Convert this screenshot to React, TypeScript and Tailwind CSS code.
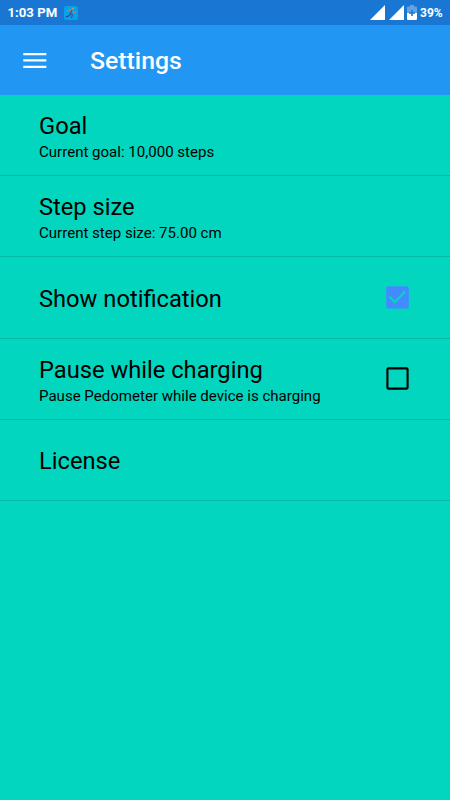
import React from 'react';

interface SettingItem {
  title: string;
  summary?: string;
  checked?: boolean;
}

const items: SettingItem[] = [
  { title: 'Goal', summary: 'Current goal: 10,000 steps' },
  { title: 'Step size', summary: 'Current step size: 75.00 cm' },
  { title: 'Show notification', checked: true },
  { title: 'Pause while charging', summary: 'Pause Pedometer while device is charging', checked: false },
  { title: 'License' },
];

const RunnerIcon = () => (
  <svg width="14" height="14" viewBox="0 0 14 14" className="ml-[7px]">
    <rect width="14" height="14" rx="2.5" fill="#04a3e8" />
    <circle cx="9" cy="2.6" r="1.2" fill="#b49a62" />
    <path d="M8 4 6.3 7.6l2.2 1.7L7.2 12" fill="none" stroke="#4a4fa6" strokeWidth="1.4" />
    <path d="M6.2 8.2 4.5 10 1.8 11" fill="none" stroke="#303a98" strokeWidth="1.2" />
    <path d="M7.5 4.2 4.5 4 3 6M8.5 5l1.5 1.8 2.2-1.3" fill="none" stroke="#b08d64" strokeWidth="1" />
  </svg>
);

const SignalIcon = () => (
  <svg width="15" height="15" viewBox="0 0 15 15">
    <path d="M15 0v15H0z" fill="#fff" />
  </svg>
);

const BatteryIcon = () => (
  <svg width="10" height="15" viewBox="0 0 10 15">
    <path d="M3 0h4v1.5h2q1 0 1 1V8H0V2.5q0-1 1-1h2z" fill="#64a3e2" />
    <path d="M0 8h10v6q0 1-1 1H1q-1 0-1-1z" fill="#fff" />
    <path d="M5 5v6M2 8h6" stroke="#1976d2" strokeWidth="1.6" />
  </svg>
);

const Checkbox: React.FC<{ checked: boolean }> = ({ checked }) => (
  <svg width="23" height="23" viewBox="0 0 23 23" className="shrink-0">
    {checked ? (
      <>
        <rect x="0.2" y="0.2" width="22.6" height="22.4" rx="2" fill="#448aff" />
        <path d="m3.5 10.8 5.5 5.2L19.3 5.4" fill="none" stroke="#02d6be" strokeWidth="2.3" />
      </>
    ) : (
      <rect x="1.4" y="1.4" width="20.2" height="20.2" rx="1" fill="none" stroke="#000" strokeWidth="2.1" />
    )}
  </svg>
);

const SettingRow: React.FC<{ item: SettingItem }> = ({ item }) => (
  <div className="flex h-[81.2px] items-center justify-between border-b border-[#04b8a4] pr-[41px] pl-[39px]">
    <div className="pt-[3px] whitespace-nowrap text-black">
      <p className="text-[23.7px] leading-7">{item.title}</p>
      {item.summary && <p className="mt-[2px] -mb-px text-[15.05px] leading-[20px]">{item.summary}</p>}
    </div>
    {item.checked !== undefined && <Checkbox checked={item.checked} />}
  </div>
);

const App: React.FC = () => {
  return (
    <div className="flex h-[800px] w-[450px] flex-col overflow-hidden bg-[#02d6be] font-['Roboto',sans-serif]">
      {/* Status bar */}
      <div className="flex h-[25px] shrink-0 items-center bg-[#1976d2] pr-2 pl-[7.5px] text-white">
        <span className="pt-px text-[13.2px] font-bold leading-none">1:03 PM</span>
        <RunnerIcon />
        <div className="ml-auto flex items-center gap-1">
          <SignalIcon />
          <SignalIcon />
          <div className="-ml-px">
            <BatteryIcon />
          </div>
          <span className="-ml-px w-[22px] pt-px text-[12px] font-bold leading-none">39%</span>
        </div>
      </div>

      {/* App bar */}
      <header className="flex h-[70px] shrink-0 items-center bg-[#2196f3] pl-[23px] text-white">
        <svg width="24" height="17" viewBox="0 0 24 17" fill="#fff">
          <path d="M.3 1h23v2.3H.3zM.3 7.3h23v2.3H.3zM.3 13.7h23V16H.3z" />
        </svg>
        <h1 className="ml-[43px] pt-[2px] text-[24.8px] font-medium leading-8">Settings</h1>
      </header>

      <main>
        {items.map(item => (
          <SettingRow key={item.title} item={item} />
        ))}
      </main>
    </div>
  );
};

export default App;
